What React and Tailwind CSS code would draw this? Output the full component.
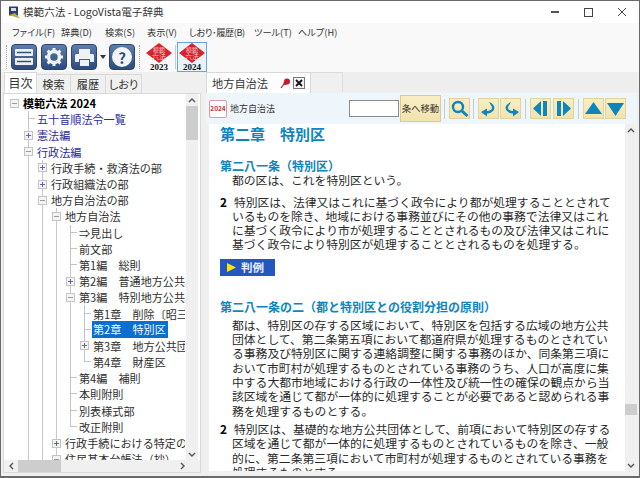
import React from "react";

const Box = ({ open }) => (
  <svg width="9" height="9" viewBox="0 0 9 9" className="shrink-0">
    <rect x="0.5" y="0.5" width="8" height="8" fill="#f4f4f4" stroke="#c4c4c4" />
    <path d="M2 4.5H7" stroke={open ? "#9a9a9a" : "#5a63b8"} strokeWidth="1" />
    {!open && <path d="M4.5 2V7" stroke="#5a63b8" strokeWidth="1" />}
  </svg>
);

const Guide = ({ on }) => (
  <span className="w-[14px] h-full shrink-0 flex justify-center">
    {on ? <span className="w-px h-full bg-[#c9c9c9]" /> : null}
  </span>
);

const Connector = ({ kind, last }) => {
  if (kind === "leaf") {
    return (
      <span className="w-[14px] h-full shrink-0 pl-[7px]">
        <span className={last ? "block h-1/2 border-l border-b border-[#c4c4c4]" : "block h-full border-l border-[#c4c4c4]"}>
          {!last && <span className="block h-1/2 border-b border-[#c4c4c4]" />}
        </span>
      </span>
    );
  }
  return (
    <span className="w-[14px] h-full shrink-0 flex flex-col items-center">
      <span className="w-px flex-1 bg-[#c9c9c9]" />
      <Box open={kind === "minus"} />
      <span className="w-px flex-1 bg-[#c9c9c9]" />
    </span>
  );
};

const Row = ({ g = [], kind, last, label, tone = "text-[#2f2f2f]", sel, bold }) => (
  <div className="flex h-[16.2px] items-center whitespace-nowrap text-[11.1px] leading-[16px]">
    {g.map((on, i) => (
      <Guide key={i} on={on} />
    ))}
    {kind === "root" ? (
      <span className="w-[14px] h-full shrink-0 flex items-center justify-center">
        <Box open />
      </span>
    ) : (
      <Connector kind={kind} last={last} />
    )}
    <span className={`ml-[1px] px-[1px] ${sel ? "bg-[#0b6fd0] text-[#f2f7ff] h-[17px] pr-[2px]" : tone} ${bold ? "font-bold text-black" : ""}`}>
      {label}
    </span>
  </div>
);

const BLUE = "text-[#2b2ba0]";
const rows = [
  { kind: "root", label: "模範六法 2024", bold: true },
  { g: [0], kind: "leaf", label: "五十音順法令一覧", tone: BLUE },
  { g: [0], kind: "plus", label: "憲法編", tone: BLUE },
  { g: [0], kind: "minus", label: "行政法編", tone: BLUE },
  { g: [0, 1], kind: "plus", label: "行政手続・救済法の部" },
  { g: [0, 1], kind: "plus", label: "行政組織法の部" },
  { g: [0, 1], kind: "minus", label: "地方自治法の部" },
  { g: [0, 1, 1], kind: "minus", label: "地方自治法" },
  { g: [0, 1, 1, 1], kind: "leaf", label: "⇒見出し" },
  { g: [0, 1, 1, 1], kind: "leaf", label: "前文部" },
  { g: [0, 1, 1, 1], kind: "leaf", label: "第1編　総則" },
  { g: [0, 1, 1, 1], kind: "plus", label: "第2編　普通地方公共団体" },
  { g: [0, 1, 1, 1], kind: "minus", label: "第3編　特別地方公共団体" },
  { g: [0, 1, 1, 1, 1], kind: "leaf", label: "第1章　削除〔昭三八法" },
  { g: [0, 1, 1, 1, 1], kind: "leaf", label: "第2章　特別区", sel: true },
  { g: [0, 1, 1, 1, 1], kind: "plus", label: "第3章　地方公共団体" },
  { g: [0, 1, 1, 1, 1], kind: "leaf", last: true, label: "第4章　財産区" },
  { g: [0, 1, 1, 1], kind: "leaf", label: "第4編　補則" },
  { g: [0, 1, 1, 1], kind: "leaf", label: "本則附則" },
  { g: [0, 1, 1, 1], kind: "leaf", label: "別表様式部" },
  { g: [0, 1, 1, 1], kind: "leaf", last: true, label: "改正附則" },
  { g: [0, 1, 1], kind: "plus", label: "行政手続における特定の個人" },
  { g: [0, 1, 1], kind: "minus", label: "住民基本台帳法（抄）" },
];

const DarkBtn = ({ children, className = "" }) => (
  <div className={`w-[26px] h-[26px] rounded-[4px] bg-gradient-to-b from-[#5f7da9] to-[#2c4a7c] border border-[#2b4673] flex items-center justify-center shrink-0 ${className}`}>
    {children}
  </div>
);

const Book = ({ year }) => (
  <svg width="28" height="28" viewBox="0 0 28 28">
    <polygon points="14,0 27,10 14,20 1,10" fill="#d8232f" />
    <text x="14" y="8.5" textAnchor="middle" fontSize="6" fill="#f6c8c8" fontFamily="Noto Sans CJK JP">模範</text>
    <text x="14" y="15.5" textAnchor="middle" fontSize="7" fill="#f6c8c8" fontFamily="Noto Sans CJK JP">六法</text>
    <text x="14" y="27" textAnchor="middle" fontSize="9" fontWeight="700" fill="#111" fontFamily="Liberation Serif">{year}</text>
  </svg>
);

const Sep = ({ className = "" }) => <div className={`w-px bg-[#c8ccd0] shrink-0 ${className}`} />;

const TanBtn = ({ children, className = "" }) => (
  <div className={`w-[21px] h-[21px] bg-gradient-to-b from-[#f9eec4] to-[#f2e3ad] border border-[#e0d49c] flex items-center justify-center shrink-0 ${className}`}>
    {children}
  </div>
);

const C = "#0e86bd";
const Tri = ({ d }) => (
  <svg width="17" height="17" viewBox="0 0 17 17">
    <path d={d} fill={C} />
  </svg>
);

const Art = ({ children }) => <div className="text-[12px] leading-[14.2px] font-bold text-[#0e86bd]">{children}</div>;
const Lines = ({ items }) => (
  <div className="pl-[12px] text-[11.8px] leading-[14.3px] text-[#2a2a2a] whitespace-nowrap">
    {items.map((t) => (
      <div key={t}>{t}</div>
    ))}
  </div>
);
const Para2 = ({ first, rest, className = "" }) => (
  <div className={`text-[11.8px] leading-[14.3px] text-[#2a2a2a] whitespace-nowrap ${className}`}>
    <div>
      <span className="font-bold text-black mr-[7px]">2</span>
      {first}
    </div>
    <Lines items={rest} />
  </div>
);

const Chevron = ({ d }) => (
  <svg width="12" height="12" viewBox="0 0 12 12" className="shrink-0">
    <path d={d} fill="none" stroke="#555" strokeWidth="1.4" />
  </svg>
);

export default function App() {
  return (
    <div className="w-[640px] h-[478px] overflow-hidden bg-[#f0f0f0] border-x border-t border-b-2 border-[#6a6a6a] flex flex-col font-['Noto_Sans_CJK_JP',sans-serif]">
      {/* title bar */}
      <div className="h-[22px] bg-white flex items-center shrink-0">
        <svg width="13" height="13" viewBox="0 0 13 13" className="ml-[7px]">
          <rect x="1" y="0.5" width="9" height="9" fill="#27406e" />
          <rect x="3" y="2" width="5" height="3" fill="#d4dbe6" />
          <path d="M1 9L12 12.5L7 7Z" fill="#c9a23a" />
        </svg>
        <span className="ml-[2px] text-[10.6px] text-[#333]">模範六法 - LogoVista電子辞典</span>
        <div className="ml-auto flex items-center text-[#333]">
          <span className="w-[8px] h-[1.5px] bg-[#555] mr-[25px]" />
          <span className="w-[9px] h-[9px] border-[1.5px] border-[#444] mr-[24px]" />
          <svg width="10" height="10" viewBox="0 0 10 10" className="mr-[12px]">
            <path d="M1 1L9 9M9 1L1 9" stroke="#444" strokeWidth="1" />
          </svg>
        </div>
      </div>
      {/* menu */}
      <div className="h-[19px] bg-[#f9f9f9] flex items-center shrink-0 text-[9.2px] text-[#333] whitespace-nowrap [font-feature-settings:'palt']">
        <span className="ml-[11px] w-[49px]">ファイル(F)</span>
        <span className="w-[44px]">辞典(D)</span>
        <span className="w-[42px]">検索(S)</span>
        <span className="w-[42px]">表示(V)</span>
        <span className="w-[65px] tracking-[-0.4px]">しおり･履歴(B)</span>
        <span className="w-[44px]">ツール(T)</span>
        <span>ヘルプ(H)</span>
      </div>
      {/* toolbar */}
      <div className="h-[30px] bg-[#f9f9f9] flex items-center shrink-0">
        <div className="ml-[5px] w-px h-[24px] border-l border-dotted border-[#aaa]" />
        <DarkBtn className="ml-[4px]">
          <svg width="20" height="18" viewBox="0 0 20 18">
            <rect x="1" y="1" width="18" height="7" rx="1" fill="#eef2f7" />
            <rect x="1" y="10" width="18" height="7" rx="1" fill="#eef2f7" />
            <path d="M3 4.5H17M3 13.5H17" stroke="#35507e" strokeWidth="1.5" />
          </svg>
        </DarkBtn>
        <DarkBtn className="ml-[4px]">
          <svg width="20" height="20" viewBox="0 0 20 20">
            <circle cx="10" cy="10" r="5.5" fill="none" stroke="#f0f3f8" strokeWidth="3.5" />
            <path d="M10 1V4M10 16V19M1 10H4M16 10H19M3.6 3.6L5.8 5.8M14.2 14.2L16.4 16.4M3.6 16.4L5.8 14.2M14.2 5.8L16.4 3.6" stroke="#f0f3f8" strokeWidth="3" />
          </svg>
        </DarkBtn>
        <DarkBtn className="ml-[4px]">
          <svg width="21" height="19" viewBox="0 0 21 19">
            <rect x="5" y="1" width="11" height="5" fill="#eef2f7" />
            <path d="M2 6H19Q20 6 20 8V14H16V11H5V14H1V8Q1 6 2 6Z" fill="#eef2f7" />
            <rect x="6" y="12" width="9" height="6" fill="#eef2f7" />
          </svg>
        </DarkBtn>
        <svg width="6" height="4" viewBox="0 0 6 4" className="ml-[3px] mr-[3px]">
          <path d="M0 0H6L3 4Z" fill="#333" />
        </svg>
        <DarkBtn>
          <div className="w-[20px] h-[20px] rounded-full bg-[#f2f4f8] flex items-center justify-center text-[15px] font-bold leading-none text-[#2f4c7e]">?</div>
        </DarkBtn>
        <div className="ml-[4px] w-px h-[24px] border-l border-dotted border-[#aaa]" />
        <div className="ml-[5px] h-[28px]">
          <Book year="2023" />
        </div>
        <Sep className="h-[24px] ml-[2px]" />
        <div className="ml-[1px] w-[30px] h-[30px] border border-[#63a9e0] bg-[#e8f3fc] flex items-center justify-center">
          <Book year="2024" />
        </div>
      </div>
      {/* body */}
      <div className="flex-1 min-h-0 flex">
        {/* left */}
        <div className="w-[200px] shrink-0 pl-[2px] flex flex-col">
          <div className="h-[21px] flex items-end text-[11.2px] shrink-0 text-[#333] whitespace-nowrap">
            <div className="ml-[1px] w-[33px] h-[21px] bg-white border-x border-t border-[#d9d9d9] flex items-center justify-center text-[12px]">目次</div>
            <div className="w-[34px] h-[19px] bg-[#f0f0f0] border-r border-t border-[#d9d9d9] flex items-center justify-center">検索</div>
            <div className="w-[35px] h-[19px] bg-[#f0f0f0] border-r border-t border-[#d9d9d9] flex items-center justify-center">履歴</div>
            <div className="w-[36px] h-[19px] bg-[#f0f0f0] border-r border-t border-[#d9d9d9] flex items-center justify-center [font-feature-settings:'palt']">しおり</div>
          </div>
          <div className="flex-1 min-h-0 mb-[3px] bg-white border border-[#d9d9d9] flex flex-col">
            <div className="flex-1 min-h-0 flex">
              <div className="flex-1 min-w-0 overflow-hidden pl-[3px] pt-[1px]">
                {rows.map((r) => (
                  <Row key={r.label} {...r} />
                ))}
              </div>
              <div className="w-[12px] ml-px mr-[2px] bg-[#f0f0f0] flex flex-col items-center shrink-0">
                <Chevron d="M3 8L6 5L9 8" />
                <div className="w-full h-[34px] bg-[#cdcdcd] shrink-0" />
                <div className="flex-1" />
                <Chevron d="M3 5L6 8L9 5" />
              </div>
            </div>
            <div className="h-[12px] shrink-0 bg-[#f0f0f0] flex items-center pl-[1px]">
              <Chevron d="M8 3L5 6L8 9" />
              <div className="ml-[1px] w-[43px] h-full bg-[#cdcdcd]" />
              <div className="flex-1" />
              <Chevron d="M5 3L8 6L5 9" />
              <div className="w-[12px]" />
            </div>
          </div>
        </div>
        {/* right */}
        <div className="flex-1 min-w-0 pl-[5px] pr-[2px] flex flex-col">
          <div className="h-[20px] shrink-0 flex bg-[#eeeeee] text-[11.2px] text-[#333]">
            <div className="w-[105px] h-[21px] bg-white border-x border-t border-[#d9d9d9] flex items-center pl-[5px] z-10">
              地方自治法
              <svg width="11" height="11" viewBox="0 0 11 11" className="ml-[12px]">
                <circle cx="7" cy="3.5" r="3" fill="#c8182a" />
                <rect x="3.5" y="4" width="3" height="3" fill="#c8182a" />
                <path d="M1 10L4 6" stroke="#c8182a" strokeWidth="1.2" />
              </svg>
              <div className="ml-[2px] w-[12px] h-[12px] border border-[#777] bg-[#f4f4f4] flex items-center justify-center">
                <svg width="8" height="8" viewBox="0 0 8 8">
                  <path d="M1 1L7 7M7 1L1 7" stroke="#111" strokeWidth="1.8" />
                </svg>
              </div>
            </div>
            <div className="w-[32px] h-[20px] bg-[#f0f0f0] border-r border-t border-[#dddddd]" />
          </div>
          <div className="h-[31px] shrink-0 mt-px bg-[#eef6fc] flex items-center pl-[3px]">
            <div className="w-[18px] h-[18px] rounded-[2px] border border-[#d99aa0] bg-white text-[6.5px] font-bold text-[#c2303a] flex items-center justify-center leading-none">2024</div>
            <span className="ml-[3px] w-[44px] text-[9px] text-[#333] whitespace-nowrap">地方自治法</span>
            <div className="ml-[75px] w-[50px] h-[17px] bg-white border-[1.5px] border-[#8c8c8c]" />
            <div className="ml-px w-[41px] h-[27px] bg-gradient-to-b from-[#f9eec4] to-[#f2e3ad] border border-[#dccd8f] text-[9.4px] text-[#333] flex items-center justify-center">条へ移動</div>
            <Sep className="h-[20px] ml-[3px]" />
            <TanBtn className="ml-[4px]">
              <svg width="18" height="18" viewBox="0 0 18 18">
                <circle cx="7" cy="7" r="5" fill="none" stroke={C} strokeWidth="2.4" />
                <path d="M11 11L16.5 16" stroke={C} strokeWidth="3" />
              </svg>
            </TanBtn>
            <Sep className="h-[20px] ml-[3px]" />
            <TanBtn className="ml-[4px]">
              <svg width="18" height="18" viewBox="0 0 18 18">
                <path d="M9 2C14 4 16 8 13 11C11 13 9 13.5 7 13.5V16.5L1 12L7 8.5V11C9 11 12 10 12 8C12 6 10 4 9 2Z" fill={C} />
              </svg>
            </TanBtn>
            <TanBtn className="ml-[1px]">
              <svg width="18" height="18" viewBox="0 0 18 18">
                <path d="M9 2C4 4 2 8 5 11C7 13 9 13.5 11 13.5V16.5L17 12L11 8.5V11C9 11 6 10 6 8C6 6 8 4 9 2Z" fill={C} />
              </svg>
            </TanBtn>
            <Sep className="h-[20px] ml-[4px]" />
            <TanBtn className="ml-[4px]">
              <Tri d="M9 1V16L1 8.5ZM11 1H15V16H11Z" />
            </TanBtn>
            <TanBtn className="ml-[2px]">
              <Tri d="M8 1V16L16 8.5ZM2 1H6V16H2Z" />
            </TanBtn>
            <Sep className="h-[20px] ml-[4px]" />
            <TanBtn className="ml-[4px]">
              <Tri d="M8.5 2L17 14H0Z" />
            </TanBtn>
            <TanBtn className="ml-[1px]">
              <Tri d="M0 3H17L8.5 16Z" />
            </TanBtn>
          </div>
          <div className="flex-1 min-h-0 mb-[5px] bg-white flex border-l-[3px] border-[#f0f0f0]">
            <div className="flex-1 min-w-0 overflow-hidden pl-[11px] pt-[1px]">
              <div className="text-[15px] leading-[18px] font-bold text-[#0e86bd]">第二章　特別区</div>
              <div className="mt-[16px]">
                <Art>第二八一条（特別区）</Art>
                <Lines items={["都の区は、これを特別区という。"]} />
              </div>
              <Para2
                className="mt-[7px]"
                first="特別区は、法律又はこれに基づく政令により都が処理することとされて"
                rest={[
                  "いるものを除き、地域における事務並びにその他の事務で法律又はこれ",
                  "に基づく政令により市が処理することとされるもの及び法律又はこれに",
                  "基づく政令により特別区が処理することとされるものを処理する。",
                ]}
              />
              <div className="mt-[7px] w-[55px] h-[17px] bg-[#2458c0] flex items-center text-[11.5px] font-bold text-[#e8eefc]">
                <svg width="9" height="9" viewBox="0 0 9 9" className="ml-[7px] mr-[5px]">
                  <path d="M0 0L9 4.5L0 9Z" fill="#ffe600" />
                </svg>
                判例
              </div>
              <div className="mt-[24px]">
                <Art>第二八一条の二（都と特別区との役割分担の原則）</Art>
                <div className="mt-[4px]">
                  <Lines
                    items={[
                      "都は、特別区の存する区域において、特別区を包括する広域の地方公共",
                      "団体として、第二条第五項において都道府県が処理するものとされてい",
                      "る事務及び特別区に関する連絡調整に関する事務のほか、同条第三項に",
                      "おいて市町村が処理するものとされている事務のうち、人口が高度に集",
                      "中する大都市地域における行政の一体性及び統一性の確保の観点から当",
                      "該区域を通じて都が一体的に処理することが必要であると認められる事",
                      "務を処理するものとする。",
                    ]}
                  />
                </div>
              </div>
              <Para2
                className="mt-[4px]"
                first="特別区は、基礎的な地方公共団体として、前項において特別区の存する"
                rest={[
                  "区域を通じて都が一体的に処理するものとされているものを除き、一般",
                  "的に、第二条第三項において市町村が処理するものとされている事務を",
                  "処理するものとする。",
                ]}
              />
            </div>
            <div className="w-[12px] bg-[#f0f0f0] shrink-0 flex flex-col items-center">
              <Chevron d="M3 8L6 5L9 8" />
              <div className="h-[268px] shrink-0" />
              <div className="w-full h-[11px] bg-[#cdcdcd] shrink-0" />
              <div className="flex-1" />
              <Chevron d="M3 5L6 8L9 5" />
            </div>
          </div>
        </div>
      </div>
    </div>
  );
}
